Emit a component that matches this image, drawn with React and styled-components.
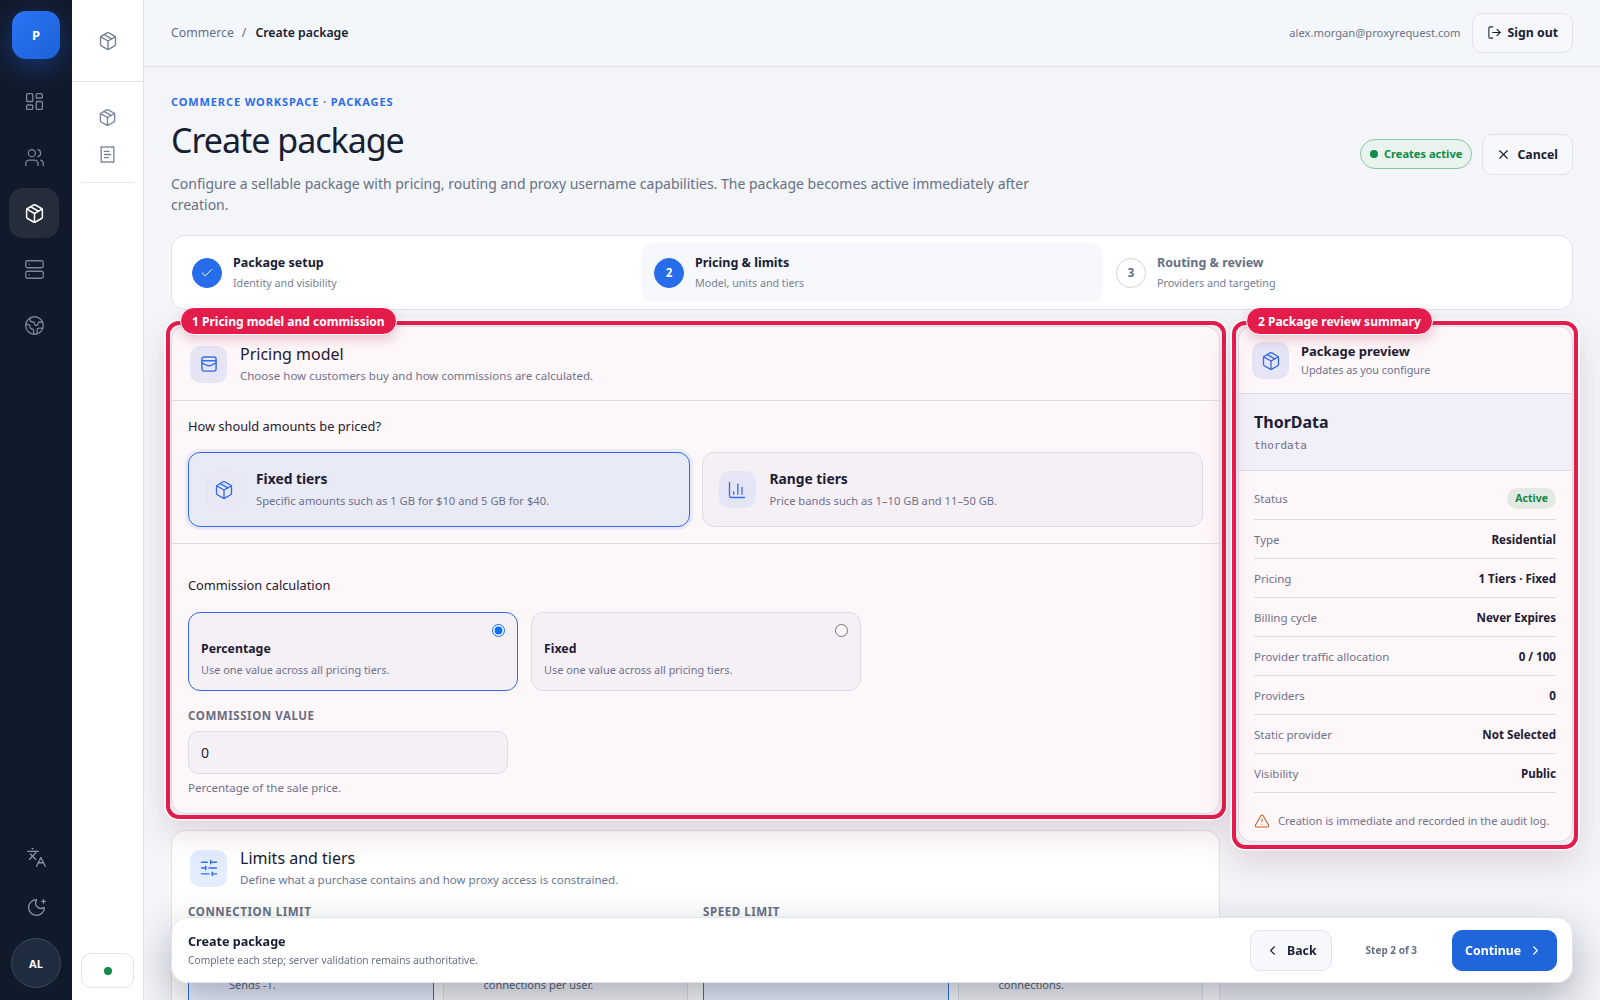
import React from "react";
import styled, { createGlobalStyle } from "styled-components";
import {
  LayoutDashboard,
  Users,
  Package,
  Server,
  Earth,
  Languages,
  MoonStar,
  ReceiptText,
  LogOut,
  X,
  Check,
  ChartColumn,
  SlidersHorizontal,
  TriangleAlert,
  ChevronLeft,
  ChevronRight,
} from "lucide-react";

const GlobalStyle = createGlobalStyle`
  html, body { margin: 0; padding: 0; height: 100%; }
  body {
    font-family: "Noto Sans", "Liberation Sans", sans-serif;
    color: #172033;
    background: #f3f5f9;
  }
  * { box-sizing: border-box; }
`;

const Shell = styled.div`
  display: flex;
  width: 100%;
  height: 100vh;
  overflow: hidden;
`;

const Rail = styled.aside`
  flex: 0 0 72px;
  display: flex;
  flex-direction: column;
  padding: 11px 0 12px;
  background: #111a2b;
`;

const Logo = styled.div`
  width: 48px;
  height: 48px;
  margin-left: 12px;
  display: flex;
  align-items: center;
  justify-content: center;
  border-radius: 14px;
  color: #fff;
  font-size: 13px;
  font-weight: 700;
  background: linear-gradient(135deg, #2b74f6, #1d62d8);
  box-shadow: 0 8px 28px rgba(37, 99, 235, 0.38);
`;

const RailNav = styled.nav`
  display: flex;
  flex-direction: column;
  gap: 6px;
  margin: 17px 0 0 9px;
`;

const RailItem = styled.div`
  width: 50px;
  height: 50px;
  display: flex;
  align-items: center;
  justify-content: center;
  border-radius: 14px;
  color: ${(props) => (props.$active ? "#ffffff" : "#7c8698")};
  background: ${(props) => (props.$active ? "#262d3a" : "transparent")};
`;

const RailFoot = styled.div`
  margin-top: auto;
  display: flex;
  flex-direction: column;
  align-items: center;
  gap: 6px;
`;

const RailTool = styled.div`
  width: 44px;
  height: 44px;
  display: flex;
  align-items: center;
  justify-content: center;
  color: #8b94a6;
`;

const Avatar = styled.div`
  width: 50px;
  height: 50px;
  margin-top: 3px;
  display: flex;
  align-items: center;
  justify-content: center;
  border-radius: 50%;
  border: 1px solid #3b4659;
  background: #1f2b3f;
  color: #fff;
  font-size: 11px;
  font-weight: 700;
`;

const SubNav = styled.aside`
  flex: 0 0 72px;
  display: flex;
  flex-direction: column;
  background: #fff;
  border-right: 1px solid #dfe2ec;
`;

const SubHead = styled.div`
  flex: 0 0 82px;
  display: flex;
  align-items: center;
  justify-content: center;
  color: #778197;
  border-bottom: 1px solid #dfe2ec;
`;

const SubList = styled.div`
  margin: 17px 9px 0;
  padding-bottom: 9px;
  border-bottom: 1px solid #e6e8f0;
`;

const SubItem = styled.div`
  height: 37px;
  display: flex;
  align-items: center;
  justify-content: center;
  color: #778197;
`;

const StatusBox = styled.div`
  margin: auto 9px 12px;
  height: 35px;
  display: flex;
  align-items: center;
  justify-content: center;
  border: 1px solid #dfe2ec;
  border-radius: 10px;
`;

const StatusDot = styled.span`
  width: 8px;
  height: 8px;
  border-radius: 50%;
  background: #0f8a4a;
`;

const Main = styled.main`
  position: relative;
  flex: 1;
  min-width: 0;
  display: flex;
  flex-direction: column;
  overflow: hidden;
  background: #f3f5f9;
`;

const TopBar = styled.header`
  flex: 0 0 67px;
  display: flex;
  align-items: center;
  justify-content: space-between;
  padding: 0 27px 1px;
  border-bottom: 1px solid #dfe2ec;
  background: #f3f6fa;
`;

const Crumbs = styled.div`
  display: flex;
  gap: 8px;
  font-size: 12.3px;
  color: #667085;
`;

const CrumbCurrent = styled.span`
  margin-left: 1px;
  color: #172033;
  font-weight: 600;
`;

const UserArea = styled.div`
  display: flex;
  align-items: center;
  gap: 11px;
`;

const Email = styled.span`
  font-size: 11.2px;
  color: #6b7385;
`;

const Button = styled.button`
  display: inline-flex;
  align-items: center;
  justify-content: center;
  gap: 6px;
  padding: 0 14px;
  height: ${(props) => props.$height || 40}px;
  border: 1px solid #dfe2ec;
  border-radius: 10px;
  background: #f7f8fc;
  color: #172033;
  font-family: inherit;
  font-size: 12.3px;
  font-weight: 700;
`;

const CancelButton = styled(Button)`
  padding: 0 14px 0 13px;
`;

const BackButton = styled(Button)`
  gap: 7px;
`;

const PrimaryButton = styled(Button)`
  padding: 0 13px 0 12px;
  border-color: #1f66dd;
  background: #1f66dd;
  color: #fff;
  gap: 7px;
`;

const Content = styled.div`
  flex: 1;
  min-height: 0;
  padding: 27px 27px 0;
`;

const PageHead = styled.div`
  display: flex;
  align-items: center;
  justify-content: space-between;
`;

const Eyebrow = styled.div`
  font-size: 11px;
  line-height: 16px;
  font-weight: 700;
  letter-spacing: 0.08em;
  color: #2b6cf0;
`;

const PageTitle = styled.h1`
  margin: 8px 0 11px;
  font-size: 34px;
  line-height: 44px;
  font-weight: 400;
  letter-spacing: -0.03em;
  color: #172033;
`;

const PageSub = styled.p`
  margin: 0;
  max-width: 880px;
  font-size: 14px;
  line-height: 21px;
  color: #667085;
`;

const HeadActions = styled.div`
  display: flex;
  align-items: center;
  gap: 10px;
`;

const ActivePill = styled.div`
  height: 30px;
  margin-bottom: 2px;
  display: flex;
  align-items: center;
  gap: 6px;
  padding: 0 9px;
  border: 1px solid #8cc4a6;
  border-radius: 15px;
  background: #e7f3ec;
  color: #0f8a4a;
  font-size: 11.1px;
  font-weight: 700;
`;

const Stepper = styled.div`
  display: grid;
  grid-template-columns: repeat(3, 1fr);
  height: 75px;
  margin-top: 20px;
  padding: 7px;
  border: 1px solid #dfe2ec;
  border-radius: 14px;
  background: #fff;
`;

const Step = styled.div`
  display: flex;
  align-items: center;
  gap: 11px;
  padding: 0 13px;
  border-radius: 12px;
  background: ${(props) => (props.$current ? "#f7f8fc" : "transparent")};
`;

const StepBullet = styled.div`
  flex: 0 0 30px;
  height: 30px;
  display: flex;
  align-items: center;
  justify-content: center;
  border-radius: 50%;
  border: 1px solid ${(props) => (props.$todo ? "#cfd4df" : "#266ceb")};
  background: ${(props) => (props.$todo ? "#fff" : "#266ceb")};
  color: ${(props) => (props.$todo ? "#667085" : "#fff")};
  font-size: 11.5px;
  font-weight: 700;
`;

const StepTitle = styled.div`
  font-size: 12.5px;
  line-height: 18px;
  font-weight: 700;
  color: ${(props) => (props.$todo ? "#667085" : "#172033")};
`;

const StepSub = styled.div`
  margin-top: 3px;
  font-size: 10.7px;
  line-height: 16px;
  color: #768095;
`;

const Columns = styled.div`
  display: grid;
  grid-template-columns: 1049px 335px;
  gap: 18px;
  align-items: start;
  margin-top: 16px;
`;

const Stack = styled.div`
  display: flex;
  flex-direction: column;
  gap: 16px;
`;

const Card = styled.section`
  position: relative;
  border: 1px solid #dfe2ec;
  border-radius: 14px;
  background: #fff;
`;

const Ring = styled.div`
  position: absolute;
  z-index: 2;
  top: -6px;
  left: ${(props) => props.$left}px;
  right: ${(props) => props.$right}px;
  bottom: ${(props) => props.$bottom}px;
  pointer-events: none;
  border: 4px solid #e31c4c;
  border-radius: 13px;
  background: rgba(228, 30, 76, 0.035);
  box-shadow: 0 0 0 1.5px #fff, 0 14px 32px rgba(110, 30, 60, 0.16);
`;

const RingLabel = styled.div`
  position: absolute;
  z-index: 3;
  top: -20px;
  left: ${(props) => props.$left}px;
  height: 28px;
  display: flex;
  align-items: center;
  padding: 0 11px;
  border: 1.5px solid #fff;
  border-radius: 14px;
  background: #e31c4c;
  color: #fff;
  font-size: 12px;
  font-weight: 700;
  white-space: nowrap;
  box-shadow: 0 5px 12px rgba(150, 30, 60, 0.22);
`;

const CardHead = styled.div`
  display: flex;
  align-items: center;
  gap: 13px;
  padding: 17px 17px 16px 18px;
  border-bottom: ${(props) => (props.$flat ? "0" : "1px solid #dfe2ec")};
  ${(props) => props.$flat && "padding-bottom: 7px;"}
`;

const IconTile = styled.div`
  flex: 0 0 37px;
  height: 37px;
  display: flex;
  align-items: center;
  justify-content: center;
  border-radius: 10px;
  background: ${(props) => props.$bg || "#e6edfc"};
  color: #2f6fed;
`;

const CardTitle = styled.div`
  font-size: 16px;
  line-height: 20px;
  color: #172033;
`;

const CardSub = styled.div`
  margin-top: 4px;
  font-size: 11.5px;
  line-height: 16px;
  color: #6b7590;
`;

const CardBody = styled.div`
  padding: 16px 16px 16px;
  border-bottom: 1px solid #dfe2ec;
`;

const CardBodyLast = styled.div`
  padding: 32px 16px 17px;
`;

const Question = styled.div`
  font-size: 12.8px;
  line-height: 18px;
  color: #172033;
`;

const ModelGrid = styled.div`
  display: grid;
  grid-template-columns: 1fr 1fr;
  gap: 12px;
  margin-top: 17px;
`;

const ModelTile = styled.div`
  height: 75px;
  display: flex;
  align-items: center;
  gap: 14px;
  padding: 0 16px;
  border: 1px solid ${(props) => (props.$selected ? "#2b6cf0" : "#dfe2ec")};
  border-radius: 12px;
  background: ${(props) => (props.$selected ? "#e9f2fc" : "#f6f8fb")};
  box-shadow: ${(props) => (props.$selected ? "0 0 0 3px rgba(37, 99, 235, 0.09)" : "none")};
`;

const TileText = styled.div`
  padding-bottom: 2px;
`;

const TileTitle = styled.div`
  font-size: 13.8px;
  line-height: 20px;
  font-weight: 700;
  color: #172033;
`;

const TileSub = styled.div`
  margin-top: 4px;
  font-size: 11.2px;
  line-height: 16px;
  color: #6b7590;
`;

const ChoiceGrid = styled.div`
  display: grid;
  grid-template-columns: 330px 330px;
  gap: 13px;
  margin-top: 18px;
`;

const Choice = styled.label`
  position: relative;
  height: 79px;
  display: block;
  padding: 27px 12px 0;
  border: 1px solid ${(props) => (props.$selected ? "#2b6cf0" : "#dfe2ec")};
  border-radius: 12px;
  background: #f6f8fb;
`;

const ChoiceRadio = styled.input`
  position: absolute;
  top: 11px;
  right: 12px;
  width: 13px;
  height: 13px;
  margin: 0;
`;

const ChoiceTitle = styled.div`
  font-size: 12.3px;
  line-height: 18px;
  font-weight: 700;
  color: #172033;
`;

const ChoiceSub = styled.div`
  margin-top: 4px;
  font-size: 10.9px;
  line-height: 16px;
  color: #6b7590;
`;

const FieldLabel = styled.div`
  font-size: 11.5px;
  line-height: 16px;
  font-weight: 700;
  letter-spacing: 0.05em;
  color: #667085;
`;

const CommissionField = styled.div`
  margin-top: 17px;
`;

const FieldBox = styled.div`
  width: 320px;
  height: 43px;
  margin-top: 7px;
  display: flex;
  align-items: center;
  padding: 0 12px;
  border: 1px solid #dfe2ec;
  border-radius: 10px;
  background: #f6f8fb;
  font-size: 14px;
  color: #172033;
`;

const FieldHelp = styled.div`
  margin-top: 6px;
  font-size: 11.5px;
  line-height: 16px;
  color: #6b7590;
`;

const LimitsBody = styled.div`
  display: grid;
  grid-template-columns: 1fr 1fr;
  gap: 15px;
  padding: 9px 16px 24px;
`;

const LimitPair = styled.div`
  display: grid;
  grid-template-columns: 1fr 1fr;
  gap: 9px;
  margin-top: 7px;
`;

const LimitTile = styled.div`
  min-height: 80px;
  padding: 49px 13px 20px 40px;
  border: 1px solid ${(props) => (props.$selected ? "#2b6cf0" : "#dfe2ec")};
  border-radius: 12px;
  background: ${(props) => (props.$selected ? "#eef3ff" : "#f8f9fc")};
`;

const LimitSub = styled.div`
  font-size: 11px;
  line-height: 16px;
  color: #5d6678;
`;

const PreviewHead = styled.div`
  display: flex;
  align-items: center;
  gap: 12px;
  padding: 15px 13px 14px;
  border-bottom: 1px solid #dfe2ec;
`;

const PreviewText = styled.div`
  padding-bottom: 1px;
`;

const PreviewTitle = styled.div`
  font-size: 13px;
  line-height: 18px;
  font-weight: 700;
  color: #172033;
`;

const PreviewSub = styled.div`
  margin-top: 2px;
  font-size: 10.8px;
  line-height: 16px;
  color: #6b7590;
`;

const PreviewName = styled.div`
  height: 77px;
  padding: 16px 15px 0;
  border-bottom: 1px solid #dfe2ec;
  background: #f2f8fe;
`;

const NameText = styled.div`
  font-size: 16px;
  line-height: 24px;
  font-weight: 700;
  color: #172033;
`;

const NameSlug = styled.div`
  margin-top: 4px;
  font-family: "DejaVu Sans Mono", "Liberation Mono", monospace;
  font-size: 11px;
  line-height: 16px;
  color: #6b7280;
`;

const Rows = styled.div`
  padding: 6px 16px 0 15px;
`;

const Row = styled.div`
  height: ${(props) => (props.$first ? 43 : 39)}px;
  display: flex;
  align-items: center;
  justify-content: space-between;
  border-bottom: 1px solid #dfe2ec;
`;

const RowLabel = styled.span`
  font-size: 11.5px;
  color: #6b7590;
`;

const RowValue = styled.span`
  font-size: 11.6px;
  font-weight: 700;
  color: #172033;
`;

const ActiveBadge = styled.span`
  height: 21px;
  display: flex;
  align-items: center;
  padding: 0 8px;
  border-radius: 11px;
  background: #e4f1e9;
  color: #0f8a4a;
  font-size: 10.5px;
  font-weight: 700;
`;

const Notice = styled.div`
  display: flex;
  align-items: center;
  gap: 8px;
  padding: 20px 0 12px 15px;
  font-size: 11.1px;
  line-height: 16px;
  white-space: nowrap;
  color: #6b7590;
`;

const ActionBar = styled.div`
  position: absolute;
  z-index: 5;
  left: 27px;
  right: 27px;
  bottom: 17px;
  height: 66px;
  display: flex;
  align-items: center;
  padding: 0 15px 0 16px;
  border: 1px solid #e0e3ec;
  border-radius: 16px;
  background: rgba(255, 255, 255, 0.97);
  backdrop-filter: blur(14px);
  box-shadow: 0 16px 40px rgba(15, 23, 42, 0.32);
`;

const BarText = styled.div`
  flex: 1;
  padding-top: 1px;
`;

const BarTitle = styled.div`
  font-size: 12.6px;
  line-height: 18px;
  font-weight: 700;
  color: #172033;
`;

const BarSub = styled.div`
  margin-top: 2px;
  font-size: 10.25px;
  line-height: 15px;
  color: #667085;
`;

const StepCount = styled.span`
  margin: 0 35px 0 34px;
  font-size: 10px;
  font-weight: 700;
  color: #667085;
`;

const summary = [
  { label: "Type", value: "Residential" },
  { label: "Pricing", value: "1 Tiers · Fixed" },
  { label: "Billing cycle", value: "Never Expires" },
  { label: "Provider traffic allocation", value: "0 / 100" },
  { label: "Providers", value: "0" },
  { label: "Static provider", value: "Not Selected" },
  { label: "Visibility", value: "Public" },
];

const PricingIcon = () => (
  <svg width="20" height="20" viewBox="0 0 24 24" fill="none" stroke="currentColor" strokeWidth="1.7" strokeLinecap="round" strokeLinejoin="round">
    <rect x="3.5" y="3.5" width="17" height="17" rx="2.5" />
    <path d="M3.5 8h17" />
    <path d="M3.5 11c3 0 4 3 8.5 3s5.500-3 8.500-3" />
  </svg>
);

const App = () => {
  return (
    <Shell>
      <GlobalStyle />
      <Rail>
        <Logo>P</Logo>
        <RailNav>
          <RailItem><LayoutDashboard size={21} strokeWidth={1.5} /></RailItem>
          <RailItem><Users size={21} strokeWidth={1.5} /></RailItem>
          <RailItem $active><Package size={21} strokeWidth={1.7} /></RailItem>
          <RailItem><Server size={21} strokeWidth={1.5} /></RailItem>
          <RailItem><Earth size={21} strokeWidth={1.5} /></RailItem>
        </RailNav>
        <RailFoot>
          <RailTool><Languages size={21} strokeWidth={1.5} /></RailTool>
          <RailTool><MoonStar size={21} strokeWidth={1.5} /></RailTool>
          <Avatar>AL</Avatar>
        </RailFoot>
      </Rail>

      <SubNav>
        <SubHead><Package size={20} strokeWidth={1.7} /></SubHead>
        <SubList>
          <SubItem><Package size={19} strokeWidth={1.7} /></SubItem>
          <SubItem><ReceiptText size={19} strokeWidth={1.7} /></SubItem>
        </SubList>
        <StatusBox><StatusDot /></StatusBox>
      </SubNav>

      <Main>
        <TopBar>
          <Crumbs>
            <span>Commerce</span>
            <span>/</span>
            <CrumbCurrent>Create package</CrumbCurrent>
          </Crumbs>
          <UserArea>
            <Email>alex.morgan@proxyrequest.com</Email>
            <Button><LogOut size={15} strokeWidth={1.7} />Sign out</Button>
          </UserArea>
        </TopBar>

        <Content>
          <PageHead>
            <div>
              <Eyebrow>COMMERCE WORKSPACE · PACKAGES</Eyebrow>
              <PageTitle>Create package</PageTitle>
              <PageSub>
                Configure a sellable package with pricing, routing and proxy username capabilities. The package becomes active immediately after creation.
              </PageSub>
            </div>
            <HeadActions>
              <ActivePill><StatusDot />Creates active</ActivePill>
              <CancelButton $height={41}><X size={15} strokeWidth={1.7} />Cancel</CancelButton>
            </HeadActions>
          </PageHead>

          <Stepper>
            <Step>
              <StepBullet><Check size={14} strokeWidth={1.7} /></StepBullet>
              <div>
                <StepTitle>Package setup</StepTitle>
                <StepSub>Identity and visibility</StepSub>
              </div>
            </Step>
            <Step $current>
              <StepBullet>2</StepBullet>
              <div>
                <StepTitle>Pricing &amp; limits</StepTitle>
                <StepSub>Model, units and tiers</StepSub>
              </div>
            </Step>
            <Step>
              <StepBullet $todo>3</StepBullet>
              <div>
                <StepTitle $todo>Routing &amp; review</StepTitle>
                <StepSub>Providers and targeting</StepSub>
              </div>
            </Step>
          </Stepper>

          <Columns>
            <Stack>
              <Card>
                <Ring $left={-6} $right={-7} $bottom={-6} />
                <RingLabel $left={8}>1 Pricing model and commission</RingLabel>
                <CardHead>
                  <IconTile><PricingIcon /></IconTile>
                  <div>
                    <CardTitle>Pricing model</CardTitle>
                    <CardSub>Choose how customers buy and how commissions are calculated.</CardSub>
                  </div>
                </CardHead>
                <CardBody>
                  <Question>How should amounts be priced?</Question>
                  <ModelGrid>
                    <ModelTile $selected>
                      <IconTile $bg="#e9f0fb"><Package size={20} strokeWidth={1.6} /></IconTile>
                      <TileText>
                        <TileTitle>Fixed tiers</TileTitle>
                        <TileSub>Specific amounts such as 1 GB for $10 and 5 GB for $40.</TileSub>
                      </TileText>
                    </ModelTile>
                    <ModelTile>
                      <IconTile><ChartColumn size={20} strokeWidth={1.6} /></IconTile>
                      <TileText>
                        <TileTitle>Range tiers</TileTitle>
                        <TileSub>Price bands such as 1–10 GB and 11–50 GB.</TileSub>
                      </TileText>
                    </ModelTile>
                  </ModelGrid>
                </CardBody>
                <CardBodyLast>
                  <Question>Commission calculation</Question>
                  <ChoiceGrid>
                    <Choice $selected>
                      <ChoiceRadio type="radio" name="commission" defaultChecked />
                      <ChoiceTitle>Percentage</ChoiceTitle>
                      <ChoiceSub>Use one value across all pricing tiers.</ChoiceSub>
                    </Choice>
                    <Choice>
                      <ChoiceRadio type="radio" name="commission" />
                      <ChoiceTitle>Fixed</ChoiceTitle>
                      <ChoiceSub>Use one value across all pricing tiers.</ChoiceSub>
                    </Choice>
                  </ChoiceGrid>
                  <CommissionField>
                    <FieldLabel>COMMISSION VALUE</FieldLabel>
                    <FieldBox>0</FieldBox>
                    <FieldHelp>Percentage of the sale price.</FieldHelp>
                  </CommissionField>
                </CardBodyLast>
              </Card>

              <Card>
                <CardHead $flat>
                  <IconTile $bg="#e3edfd"><SlidersHorizontal size={20} strokeWidth={1.7} /></IconTile>
                  <div>
                    <CardTitle>Limits and tiers</CardTitle>
                    <CardSub>Define what a purchase contains and how proxy access is constrained.</CardSub>
                  </div>
                </CardHead>
                <LimitsBody>
                  <div>
                    <FieldLabel>CONNECTION LIMIT</FieldLabel>
                    <LimitPair>
                      <LimitTile $selected>
                        <LimitSub>Sends -1.</LimitSub>
                      </LimitTile>
                      <LimitTile>
                        <LimitSub>connections per user.</LimitSub>
                      </LimitTile>
                    </LimitPair>
                  </div>
                  <div>
                    <FieldLabel>SPEED LIMIT</FieldLabel>
                    <LimitPair>
                      <LimitTile $selected />
                      <LimitTile>
                        <LimitSub>connections.</LimitSub>
                      </LimitTile>
                    </LimitPair>
                  </div>
                </LimitsBody>
              </Card>
            </Stack>

            <Card>
              <Ring $left={-7} $right={-6} $bottom={-8} />
              <RingLabel $left={7}>2 Package review summary</RingLabel>
              <PreviewHead>
                <IconTile><Package size={20} strokeWidth={1.6} /></IconTile>
                <PreviewText>
                  <PreviewTitle>Package preview</PreviewTitle>
                  <PreviewSub>Updates as you configure</PreviewSub>
                </PreviewText>
              </PreviewHead>
              <PreviewName>
                <NameText>ThorData</NameText>
                <NameSlug>thordata</NameSlug>
              </PreviewName>
              <Rows>
                <Row $first>
                  <RowLabel>Status</RowLabel>
                  <ActiveBadge>Active</ActiveBadge>
                </Row>
                {summary.map((row) => (
                  <Row key={row.label}>
                    <RowLabel>{row.label}</RowLabel>
                    <RowValue>{row.value}</RowValue>
                  </Row>
                ))}
              </Rows>
              <Notice>
                <TriangleAlert size={16} strokeWidth={1.6} color="#c8641e" />
                Creation is immediate and recorded in the audit log.
              </Notice>
            </Card>
          </Columns>
        </Content>

        <ActionBar>
          <BarText>
            <BarTitle>Create package</BarTitle>
            <BarSub>Complete each step; server validation remains authoritative.</BarSub>
          </BarText>
          <BackButton $height={41}><ChevronLeft size={15} strokeWidth={1.7} />Back</BackButton>
          <StepCount>Step 2 of 3</StepCount>
          <PrimaryButton $height={41}>Continue<ChevronRight size={15} strokeWidth={1.7} /></PrimaryButton>
        </ActionBar>
      </Main>
    </Shell>
  );
};

export default App;
